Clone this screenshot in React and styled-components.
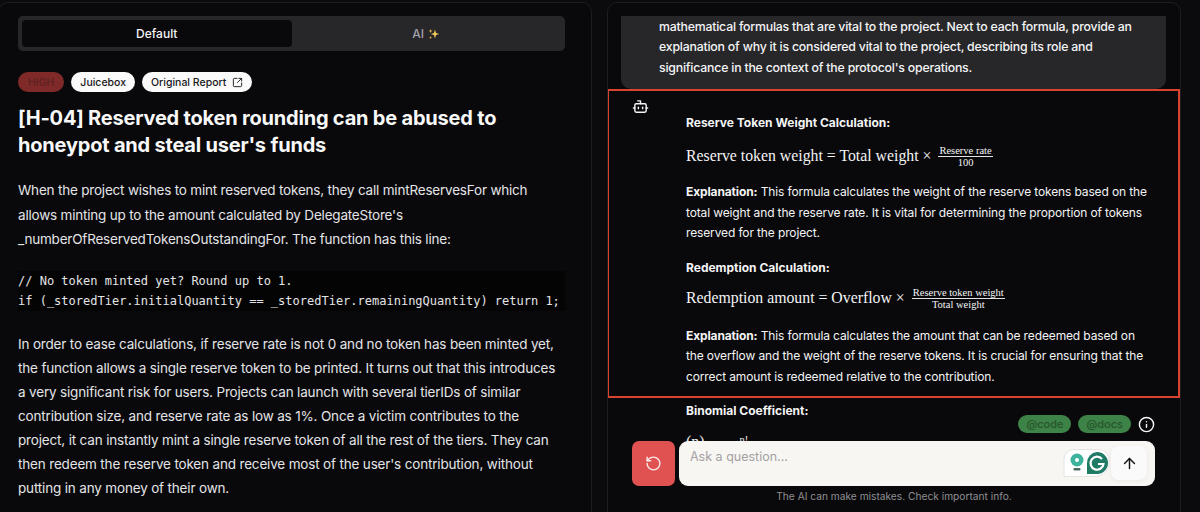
import styled, { createGlobalStyle } from 'styled-components';
import { SquareArrowOutUpRight, Bot, RotateCcw, ArrowUp, Info } from 'lucide-react';

const GlobalStyle = createGlobalStyle`
  html, body {
    margin: 0;
    height: 512px;
    overflow: hidden;
    background: #0b0b0d;
    font-family: Inter, "Liberation Sans", sans-serif;
  }
  * { box-sizing: border-box; }
`;

const Page = styled.div`
  display: grid;
  grid-template-columns: 592px 574px;
  column-gap: 15px;
  height: 512px;
  padding-top: 2px;
  overflow: hidden;
`;

const Panel = styled.section`
  position: relative;
  height: 530px;
  background: #09090b;
  border: 1px solid #1d1d20;
  border-radius: 10px;
  overflow: hidden;
`;

const LeftPanel = styled(Panel)`
  margin-left: -2px;
  padding: 13px 26px 0 19px;
`;

const Tabs = styled.div`
  display: grid;
  grid-template-columns: 1fr 1fr;
  height: 35px;
  padding: 4px;
  background: #27272a;
  border-radius: 5px;
`;

const Tab = styled.div`
  display: flex;
  align-items: center;
  justify-content: center;
  gap: 4px;
  font-size: 12px;
  font-weight: 500;
  border-radius: 4px;
  color: ${p => (p.$active ? '#f4f4f5' : '#a1a1aa')};
  background: ${p => (p.$active ? '#09090b' : 'transparent')};
`;

const Badges = styled.div`
  display: flex;
  gap: 7px;
  margin-top: 21px;
`;

const Badge = styled.span`
  display: inline-flex;
  align-items: center;
  gap: 6px;
  height: 20px;
  padding: 0 ${p => (p.$high ? '10px' : '9px')};
  border-radius: 10px;
  font-size: 10.5px;
  font-weight: 500;
  background: ${p => (p.$high ? '#7f2a28' : '#fafafa')};
  color: ${p => (p.$high ? '#5c2120' : '#18181b')};
`;

const Title = styled.h1`
  margin: 13px 0 0;
  font-size: 20px;
  letter-spacing: -0.2px;
  line-height: 27px;
  font-weight: 700;
  color: #f8f8f8;
`;

const Paragraph = styled.p`
  margin: ${p => (p.$afterCode ? '21px' : '19px')} 0 0;
  padding-right: 4px;
  font-size: 13.5px;
  letter-spacing: ${p => (p.$afterCode ? '-0.17px' : '-0.2px')};
  line-height: ${p => (p.$afterCode ? '24.1px' : '24.5px')};
  color: #e4e4e7;
`;

const Code = styled.pre`
  margin: 19px 0 0;
  padding: 0;
  background: #040405;
  font-family: "DejaVu Sans Mono", "Liberation Mono", monospace;
  font-size: 12px;
  line-height: 20px;
  color: #e4e4e7;
`;

const ChatPanel = styled(Panel)`
  padding-top: 13px;
`;

const UserMessage = styled.div`
  margin: 0 14px 0 13px;
  height: 73px;
  padding: 1px 30px 0 38px;
  overflow: hidden;
  background: #27272a;
  border-radius: 0 0 10px 10px;
  font-size: 12.3px;
  letter-spacing: -0.2px;
  font-weight: 500;
  line-height: 20.4px;
  color: #f4f4f5;
`;

const Reply = styled.div`
  position: relative;
  padding: 24px 30px 0 78px;
  color: #f4f4f5;
  font-size: 12px;
  letter-spacing: -0.13px;
  line-height: 20.4px;
`;

const BotIcon = styled.span`
  position: absolute;
  left: 24px;
  top: 9px;
  color: #f4f4f5;
  display: flex;
`;

const Highlight = styled.div`
  position: absolute;
  left: -1px;
  right: 0;
  top: 86px;
  height: 309px;
  border: 2px solid #d9432f;
  pointer-events: none;
`;

const Heading = styled.div`
  font-weight: 700;
  letter-spacing: 0;
  margin-top: ${p => (p.$first ? 0 : '14px')};
`;

const Body = styled.div`
  margin-top: ${p => (p.$tight ? '13px' : '11px')};
`;

const Strong = styled.strong`
  font-weight: 700;
`;

const Formula = styled.div`
  display: flex;
  align-items: center;
  gap: 7px;
  margin-top: ${p => (p.$tight ? '5px' : '8px')};
  height: 30px;
  font-family: "Liberation Serif", serif;
  font-size: 15.8px;
  letter-spacing: 0;
  color: #f4f4f5;
`;

const Fraction = styled.span`
  display: inline-flex;
  flex-direction: column;
  align-items: center;
  font-size: 10.5px;
  line-height: 11px;
`;

const Numerator = styled.span`
  padding: 0 1px;
  border-bottom: 1px solid #e4e4e7;
`;

const Binomial = styled(Formula)`
  align-items: flex-start;
  gap: 5px;
  margin-top: 12px;
  height: 40px;
  line-height: 16px;
`;

const Equals = styled.span`
  align-self: flex-end;
`;

const Composer = styled.div`
  position: absolute;
  left: 0;
  right: 0;
  bottom: 18px;
  height: 98px;
  pointer-events: none;
`;

const ComposerTools = styled.div`
  display: flex;
  justify-content: flex-end;
  align-items: center;
  gap: 7px;
  height: 18px;
  padding-right: 25px;
`;

const Tag = styled.span`
  display: inline-flex;
  align-items: center;
  height: 18px;
  padding: 0 8px;
  border-radius: 9px;
  background: #3d8246;
  color: #27552d;
  font-size: 11px;
  font-weight: 500;
`;

const InfoIcon = styled.span`
  display: flex;
  color: #fafafa;
`;

const InputRow = styled.div`
  display: flex;
  gap: 4px;
  margin-top: 8px;
  padding: 0 25px 0 24px;
`;

const ResetButton = styled.button`
  width: 43px;
  height: 45px;
  padding: 0;
  border: 0;
  border-radius: 7px;
  background: #e05252;
  color: #fbeaea;
  display: flex;
  align-items: center;
  justify-content: center;
`;

const InputBox = styled.div`
  position: relative;
  flex: 1;
  height: 45px;
  padding: 8px 11px;
  background: #f8f6f3;
  border-radius: 9px;
  font-size: 12.5px;
  color: #a3a1a1;
`;

const GrammarlyBadge = styled.svg`
  position: absolute;
  right: 44px;
  top: 8px;
`;

const SendButton = styled.span`
  position: absolute;
  right: 8px;
  top: 5px;
  width: 36px;
  height: 34px;
  border-radius: 8px;
  background: #fbfafa;
  box-shadow: 0 1px 4px rgba(0, 0, 0, 0.06);
  color: #111;
  display: flex;
  align-items: center;
  justify-content: center;
`;

const Disclaimer = styled.div`
  margin-top: 4px;
  text-align: center;
  font-size: 10.2px;
  color: #8f8f93;
`;

const Sparkle = () => (
  <svg width="12" height="12" viewBox="0 0 12 12">
    <path d="M7 1.5 L8 5 L11.2 6 L8 7 L7 10.5 L6 7 L2.8 6 L6 5 Z" fill="#f5cf5a" />
    <path d="M2.6 1 L3.1 2.6 L4.6 3.1 L3.1 3.6 L2.6 5.2 L2.1 3.6 L.6 3.1 L2.1 2.6 Z" fill="#f2b84b" />
    <path d="M2.6 8 L3 9.2 L4.2 9.6 L3 10 L2.6 11.2 L2.2 10 L1 9.6 L2.2 9.2 Z" fill="#f2b84b" />
  </svg>
);

const App = () => (
  <>
    <GlobalStyle />
    <Page>
      <LeftPanel>
        <Tabs>
          <Tab $active>Default</Tab>
          <Tab>AI <Sparkle /></Tab>
        </Tabs>
        <Badges>
          <Badge $high>HIGH</Badge>
          <Badge>Juicebox</Badge>
          <Badge>Original Report <SquareArrowOutUpRight size={11} /></Badge>
        </Badges>
        <Title>[H-04] Reserved token rounding can be abused to honeypot and steal user's funds</Title>
        <Paragraph>
          When the project wishes to mint reserved tokens, they call mintReservesFor which allows minting up to the amount calculated by DelegateStore's _numberOfReservedTokensOutstandingFor. The function has this line:
        </Paragraph>
        <Code>{`// No token minted yet? Round up to 1.
if (_storedTier.initialQuantity == _storedTier.remainingQuantity) return 1;`}</Code>
        <Paragraph $afterCode>
          In order to ease calculations, if reserve rate is not 0 and no token has been minted yet, the function allows a single reserve token to be printed. It turns out that this introduces a very significant risk for users. Projects can launch with several tierIDs of similar contribution size, and reserve rate as low as 1%. Once a victim contributes to the project, it can instantly mint a single reserve token of all the rest of the tiers. They can then redeem the reserve token and receive most of the user's contribution, without putting in any money of their own.
        </Paragraph>
      </LeftPanel>

      <ChatPanel>
        <UserMessage>
          mathematical formulas that are vital to the project. Next to each formula, provide an explanation of why it is considered vital to the project, describing its role and significance in the context of the protocol's operations.
        </UserMessage>
        <Reply>
          <BotIcon><Bot size={17} /></BotIcon>
          <Heading $first>Reserve Token Weight Calculation:</Heading>
          <Formula>
            Reserve token weight = Total weight ×
            <Fraction><Numerator>Reserve rate</Numerator><span>100</span></Fraction>
          </Formula>
          <Body>
            <Strong>Explanation:</Strong> This formula calculates the weight of the reserve tokens based on the total weight and the reserve rate. It is vital for determining the proportion of tokens reserved for the project.
          </Body>
          <Heading>Redemption Calculation:</Heading>
          <Formula $tight>
            Redemption amount = Overflow ×
            <Fraction><Numerator>Reserve token weight</Numerator><span>Total weight</span></Fraction>
          </Formula>
          <Body $tight>
            <Strong>Explanation:</Strong> This formula calculates the amount that can be redeemed based on the overflow and the weight of the reserve tokens. It is crucial for ensuring that the correct amount is redeemed relative to the contribution.
          </Body>
          <Heading>Binomial Coefficient:</Heading>
          <Binomial>
            <span>(n)</span>
            <Equals>=</Equals>
            <Fraction><Numerator>n!</Numerator><span>k!(n − k)!</span></Fraction>
          </Binomial>
        </Reply>
        <Highlight />
        <Composer>
          <ComposerTools>
            <Tag>@code</Tag>
            <Tag>@docs</Tag>
            <InfoIcon><Info size={17} /></InfoIcon>
          </ComposerTools>
          <InputRow>
            <ResetButton><RotateCcw size={17} /></ResetButton>
            <InputBox>
              Ask a question...
              <GrammarlyBadge width="48" height="28" viewBox="0 0 48 28">
                <path d="M10 .5 H36 A10 10 0 0 1 46 12 A14 14 0 0 1 32 27.5 H1 V10 A10 10 0 0 1 10 .5 Z" fill="#fff" stroke="#e4e4e2" />
                <circle cx="14" cy="11" r="6.5" fill="#3db39e" />
                <circle cx="14" cy="11" r="2" fill="#fff" />
                <rect x="10.5" y="19" width="7" height="2.4" rx="1" fill="#4b6b63" />
                <path d="M34 3 A11 11 0 1 1 34 25 H24 V14 A11 11 0 0 1 34 3 Z" fill="#1f7a66" />
                <path d="M39 10 A6.5 6.5 0 1 0 40.5 15 H35" fill="none" stroke="#fff" strokeWidth="2.2" />
              </GrammarlyBadge>
              <SendButton><ArrowUp size={17} /></SendButton>
            </InputBox>
          </InputRow>
          <Disclaimer>The AI can make mistakes. Check important info.</Disclaimer>
        </Composer>
      </ChatPanel>
    </Page>
  </>
);

export default App;
